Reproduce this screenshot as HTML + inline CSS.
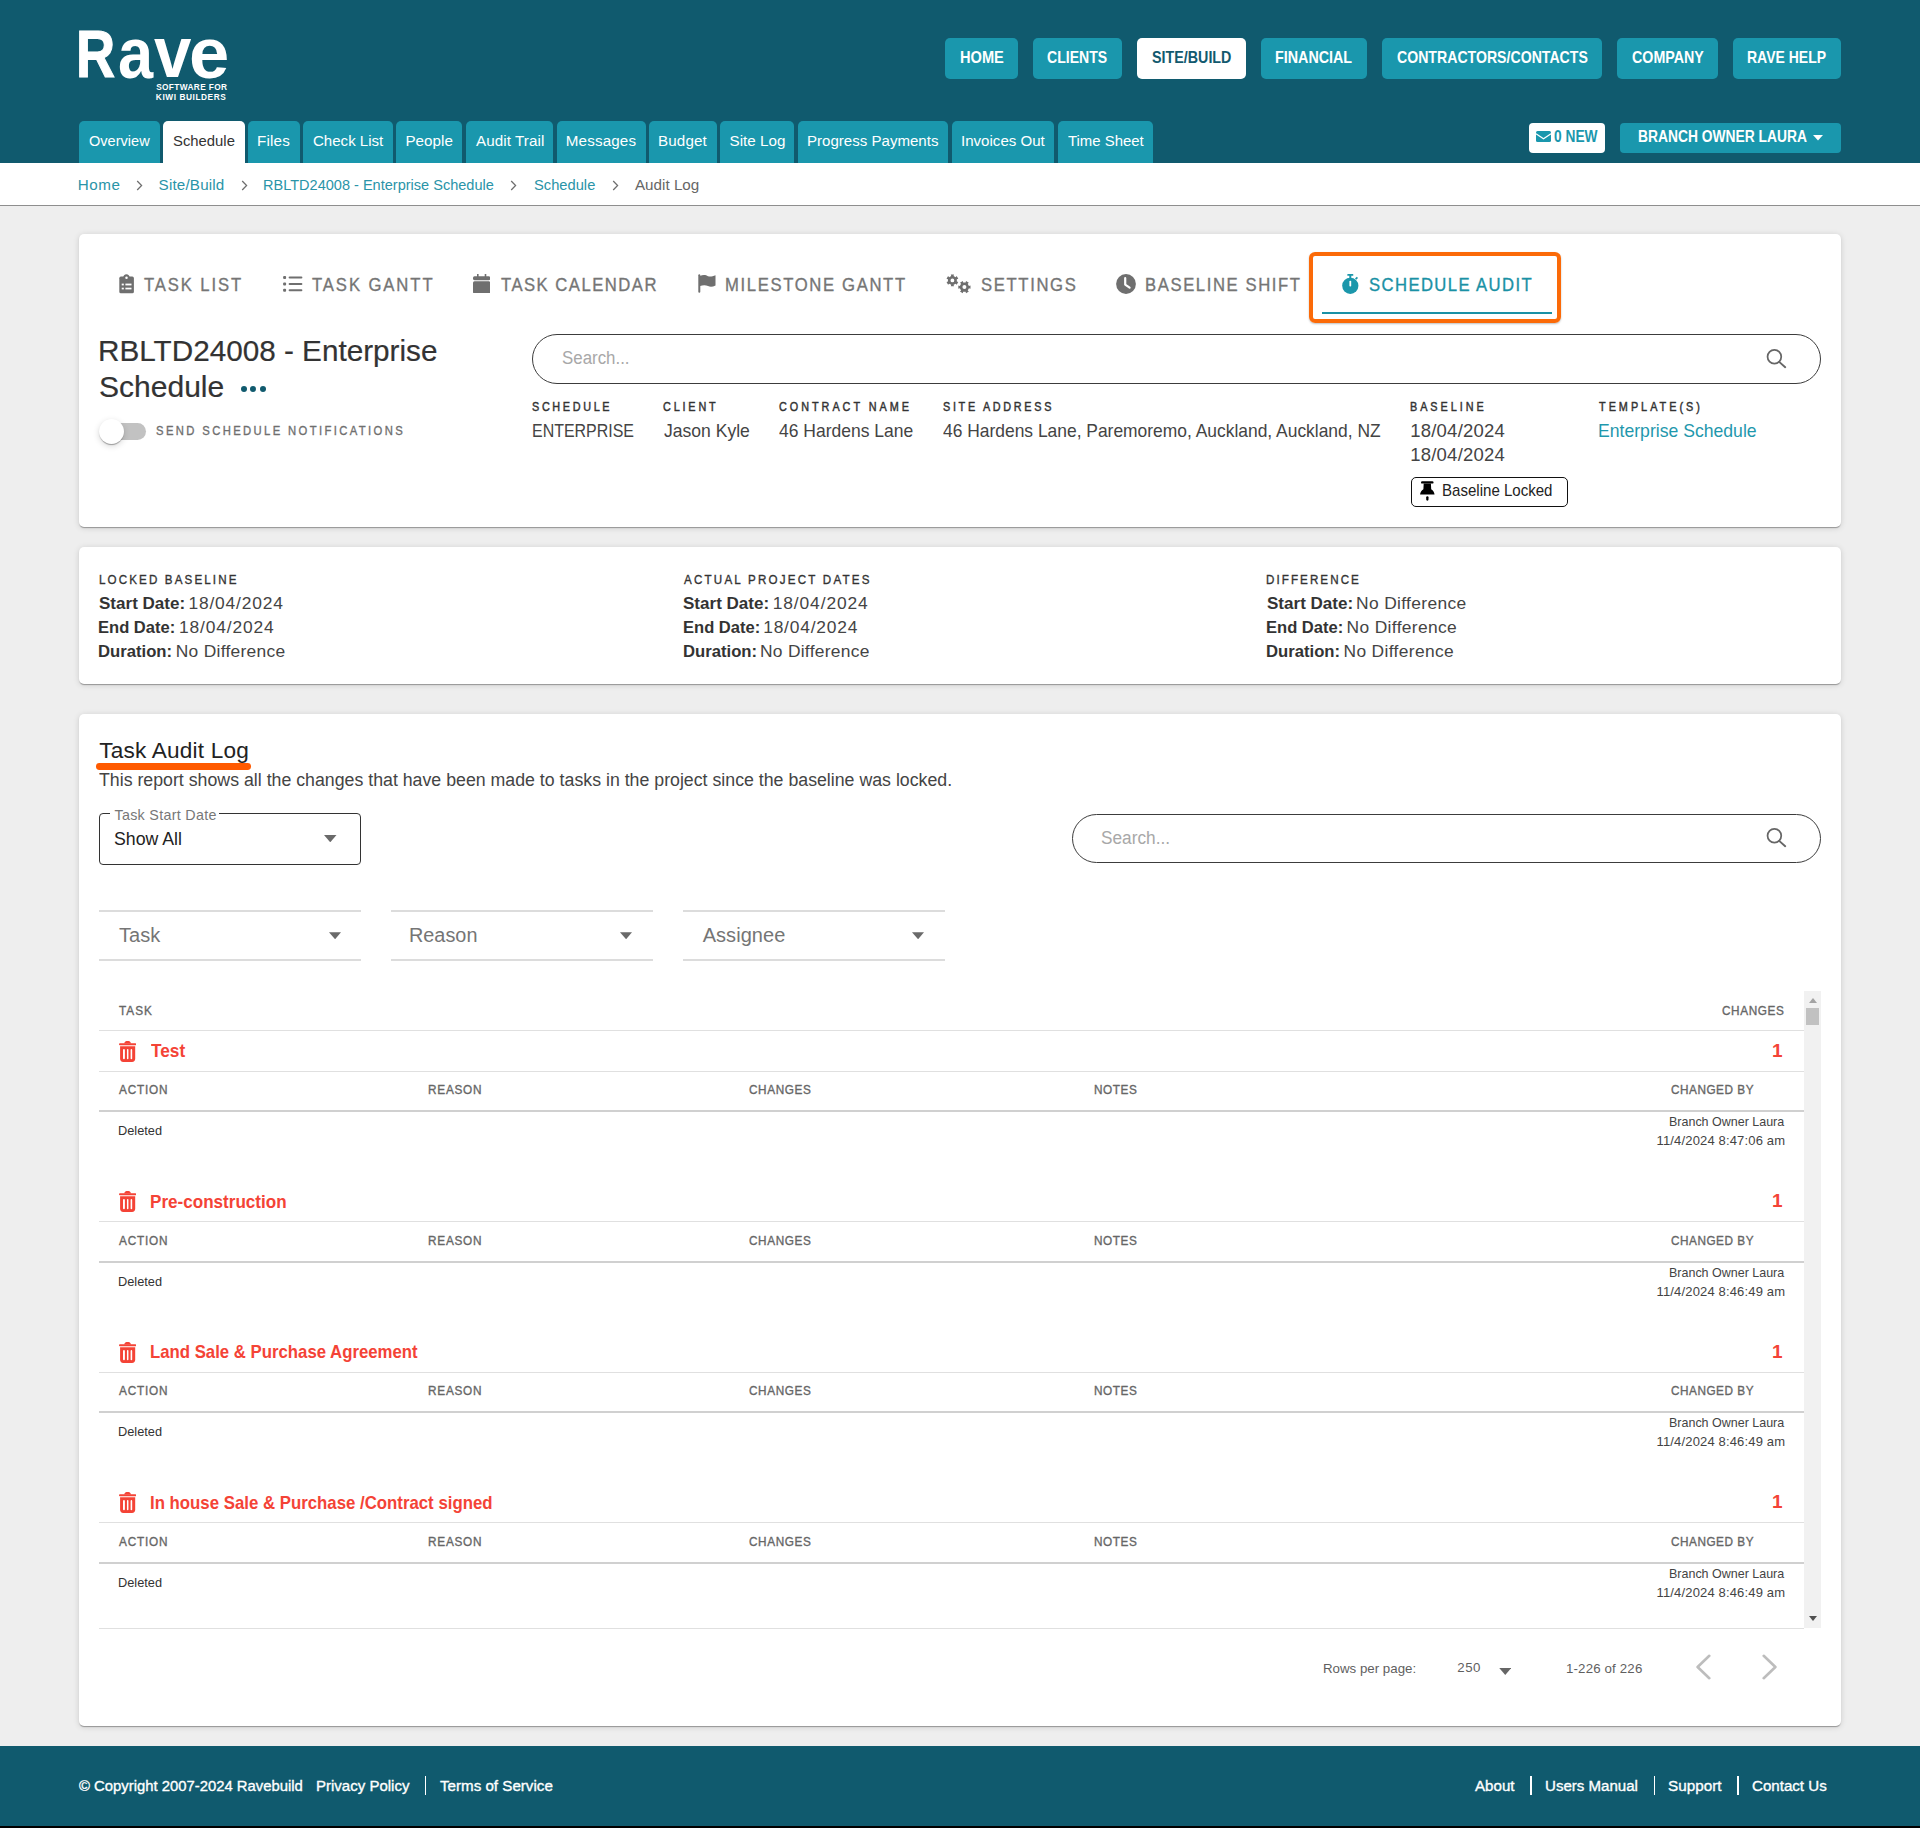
<!DOCTYPE html>
<html><head><meta charset="utf-8"><title>Rave - Schedule Audit</title>
<style>
html,body{margin:0;padding:0}
body{width:1920px;height:1828px;position:relative;overflow:hidden;background:#eeeeee;font-family:"Liberation Sans",sans-serif;}
.abs{position:absolute}
.t{position:absolute;white-space:nowrap;font-family:"Liberation Sans",sans-serif;transform-origin:0 0}
</style></head><body>
<div class="abs" style="left:0;top:0;width:1920px;height:163px;background:#105a6e"></div><div class="abs" style="left:945px;top:38px;width:73px;height:41px;border-radius:5px;background:#1a97ad"></div><div class="abs" style="left:1033px;top:38px;width:89px;height:41px;border-radius:5px;background:#1a97ad"></div><div class="abs" style="left:1137px;top:38px;width:109px;height:41px;border-radius:5px;background:#fff"></div><div class="abs" style="left:1261px;top:38px;width:106px;height:41px;border-radius:5px;background:#1a97ad"></div><div class="abs" style="left:1382px;top:38px;width:220px;height:41px;border-radius:5px;background:#1a97ad"></div><div class="abs" style="left:1617px;top:38px;width:101px;height:41px;border-radius:5px;background:#1a97ad"></div><div class="abs" style="left:1733px;top:38px;width:108px;height:41px;border-radius:5px;background:#1a97ad"></div><div class="abs" style="left:79px;top:121px;width:81px;height:42px;border-radius:5px 5px 0 0;background:#1a97ad"></div><div class="abs" style="left:163px;top:121px;width:82px;height:42px;border-radius:5px 5px 0 0;background:#fff"></div><div class="abs" style="left:248px;top:121px;width:52px;height:42px;border-radius:5px 5px 0 0;background:#1a97ad"></div><div class="abs" style="left:303px;top:121px;width:90px;height:42px;border-radius:5px 5px 0 0;background:#1a97ad"></div><div class="abs" style="left:396px;top:121px;width:66px;height:42px;border-radius:5px 5px 0 0;background:#1a97ad"></div><div class="abs" style="left:466px;top:121px;width:87px;height:42px;border-radius:5px 5px 0 0;background:#1a97ad"></div><div class="abs" style="left:557px;top:121px;width:89px;height:42px;border-radius:5px 5px 0 0;background:#1a97ad"></div><div class="abs" style="left:649px;top:121px;width:68px;height:42px;border-radius:5px 5px 0 0;background:#1a97ad"></div><div class="abs" style="left:720px;top:121px;width:74px;height:42px;border-radius:5px 5px 0 0;background:#1a97ad"></div><div class="abs" style="left:798px;top:121px;width:150px;height:42px;border-radius:5px 5px 0 0;background:#1a97ad"></div><div class="abs" style="left:952px;top:121px;width:102px;height:42px;border-radius:5px 5px 0 0;background:#1a97ad"></div><div class="abs" style="left:1058px;top:121px;width:95px;height:42px;border-radius:5px 5px 0 0;background:#1a97ad"></div><div class="abs" style="left:1529px;top:123px;width:76px;height:30px;border-radius:4px;background:#fff"></div><svg class="abs" style="left:1535.5px;top:131px" width="15" height="11" viewBox="0 0 15 11"><rect x="0" y="0" width="15" height="11" rx="1.5" fill="#1a97ad"/><path d="M0 2.7 L7.5 7.7 L15 2.7" stroke="#fff" stroke-width="1.3" fill="none"/></svg><div class="abs" style="left:1620px;top:123px;width:221px;height:30px;border-radius:4px;background:#1a97ad"></div><svg class="abs" style="left:1812.5px;top:135px" width="10" height="6" viewBox="0 0 10 6"><path d="M0 0 L10 0 L5 5.5 Z" fill="#fff"/></svg><div class="abs" style="left:0;top:163px;width:1920px;height:42px;background:#fff;border-bottom:1.5px solid #8e8e8e"></div><svg class="abs" style="left:135.7px;top:180px" width="7" height="11" viewBox="0 0 7 11"><path d="M1.2 1 L5.6 5.5 L1.2 10" stroke="#6e6e6e" stroke-width="1.25" fill="none"/></svg><svg class="abs" style="left:240.7px;top:180px" width="7" height="11" viewBox="0 0 7 11"><path d="M1.2 1 L5.6 5.5 L1.2 10" stroke="#6e6e6e" stroke-width="1.25" fill="none"/></svg><svg class="abs" style="left:510.0px;top:180px" width="7" height="11" viewBox="0 0 7 11"><path d="M1.2 1 L5.6 5.5 L1.2 10" stroke="#6e6e6e" stroke-width="1.25" fill="none"/></svg><svg class="abs" style="left:611.7px;top:180px" width="7" height="11" viewBox="0 0 7 11"><path d="M1.2 1 L5.6 5.5 L1.2 10" stroke="#6e6e6e" stroke-width="1.25" fill="none"/></svg><div class="abs" style="left:79px;top:234px;width:1762px;height:293px;background:#fff;border-radius:5px;box-shadow:0 2px 1px -1px rgba(0,0,0,.2),0 1px 1px 0 rgba(0,0,0,.14),0 1px 6px 0 rgba(0,0,0,.14);"></div><svg class="abs" style="left:119px;top:273.5px" width="15" height="20" viewBox="0 0 15 20"><rect x="0.3" y="2.6" width="14.6" height="16.7" rx="1.6" fill="#6f6f6f"/><path d="M4.1 4.2 C4.1 1.9 5.6 0.3 7.4 0.3 C9.3 0.3 10.7 1.9 10.7 4.2 Z" fill="#6f6f6f"/><circle cx="7.5" cy="3.75" r="1.25" fill="#fff"/><rect x="2.7" y="9.6" width="2.1" height="1.8" fill="#fff"/><rect x="6.4" y="9.6" width="6.1" height="1.8" fill="#fff"/><rect x="2.7" y="13.7" width="2.1" height="1.7" fill="#fff"/><rect x="6.4" y="13.7" width="6.1" height="1.7" fill="#fff"/></svg><svg class="abs" style="left:282.5px;top:275.5px" width="20" height="16" viewBox="0 0 20 16"><rect x="0.1" y="0" width="3" height="3" rx="1" fill="#6f6f6f"/><rect x="0.1" y="6.4" width="3" height="3" rx="1" fill="#6f6f6f"/><rect x="0.1" y="12.8" width="3" height="3" rx="1" fill="#6f6f6f"/><rect x="5.6" y="0.5" width="13.8" height="2" rx="1" fill="#6f6f6f"/><rect x="5.6" y="6.9" width="13.8" height="2" rx="1" fill="#6f6f6f"/><rect x="5.6" y="13.3" width="13.8" height="2" rx="1" fill="#6f6f6f"/></svg><svg class="abs" style="left:473px;top:273.7px" width="17.3" height="19.5" viewBox="0 0 17.3 19.5"><rect x="4" y="0" width="1.6" height="3" fill="#6f6f6f"/><rect x="11.7" y="0" width="1.6" height="3" fill="#6f6f6f"/><rect x="0" y="2.3" width="17.3" height="4" rx="1.5" fill="#6f6f6f"/><rect x="0" y="7.3" width="17.3" height="12.2" rx="1.5" fill="#6f6f6f"/></svg><svg class="abs" style="left:697.5px;top:274px" width="18" height="19" viewBox="0 0 18 19"><rect x="0.3" y="0.3" width="2" height="18.5" rx="1" fill="#6f6f6f"/><path d="M2 2 C5 0.5 8 1 10 2.2 C12 3 14.5 2.5 17.5 1.3 L17.5 11.5 C14.5 13 12 13 10 12 C8 11 5 10.8 2 12 Z" fill="#6f6f6f"/></svg><svg class="abs" style="left:945.5px;top:274px" width="25" height="20" viewBox="0 0 25 20"><path fill-rule="evenodd" d="M12.29 7.98 L10.71 10.71 L9.65 9.65 L7.59 10.84 L7.98 12.29 L4.82 12.29 L5.21 10.84 L3.15 9.65 L2.09 10.71 L0.51 7.98 L1.96 7.59 L1.96 5.21 L0.51 4.82 L2.09 2.09 L3.15 3.15 L5.21 1.96 L4.82 0.51 L7.98 0.51 L7.59 1.96 L9.65 3.15 L10.71 2.09 L12.29 4.82 L10.84 5.21 L10.84 7.59 Z M4.50 6.40 a1.90 1.90 0 1 0 3.80 0 a1.90 1.90 0 1 0 -3.80 0 Z" fill="#6f6f6f"/><path fill-rule="evenodd" d="M24.49 11.47 L24.49 14.73 L22.94 14.32 L21.72 16.42 L22.85 17.55 L20.03 19.19 L19.62 17.64 L17.18 17.64 L16.77 19.19 L13.95 17.55 L15.08 16.42 L13.86 14.32 L12.31 14.73 L12.31 11.47 L13.86 11.88 L15.08 9.78 L13.95 8.65 L16.77 7.01 L17.18 8.56 L19.62 8.56 L20.03 7.01 L22.85 8.65 L21.72 9.78 L22.94 11.88 Z M16.40 13.10 a2.00 2.00 0 1 0 4.00 0 a2.00 2.00 0 1 0 -4.00 0 Z" fill="#6f6f6f"/></svg><svg class="abs" style="left:1116px;top:273.5px" width="20" height="20" viewBox="0 0 20 20"><circle cx="10" cy="10" r="9.9" fill="#6f6f6f"/><path d="M9.2 4.2 L9.2 10.6 L13.6 13.6" stroke="#fff" stroke-width="2.2" fill="none" stroke-linecap="round" stroke-linejoin="round"/></svg><div class="abs" style="left:1309px;top:251.8px;width:243.8px;height:63.3px;border:4px solid #fb6a08;border-radius:6px;box-shadow:0 1px 2px rgba(0,0,0,.25)"></div><div class="abs" style="left:1322px;top:312px;width:230px;height:2.2px;background:#1a91a5"></div><svg class="abs" style="left:1341.5px;top:273.8px" width="17" height="20" viewBox="0 0 17 20"><rect x="5.3" y="0" width="6" height="1.8" rx=".5" fill="#1b97ab"/><rect x="7.3" y="1" width="2" height="3" fill="#1b97ab"/><path d="M13 4.5 L14.8 2.8 L16 4 L14.3 5.8 Z" fill="#1b97ab"/><circle cx="8.3" cy="11.8" r="8.1" fill="#1b97ab"/><rect x="7.4" y="6.8" width="1.8" height="5.8" rx=".8" fill="#fff"/></svg><div class="abs" style="left:241.00px;top:385.6px;width:6.2px;height:6.2px;border-radius:50%;background:#105a6e"></div><div class="abs" style="left:250.30px;top:385.6px;width:6.2px;height:6.2px;border-radius:50%;background:#105a6e"></div><div class="abs" style="left:259.70px;top:385.6px;width:6.2px;height:6.2px;border-radius:50%;background:#105a6e"></div><div class="abs" style="left:111px;top:423px;width:35px;height:17px;border-radius:8.5px;background:#c2c2c2"></div><div class="abs" style="left:99px;top:419px;width:25px;height:25px;border-radius:50%;background:#fff;box-shadow:0 2px 1px -1px rgba(0,0,0,.2),0 1px 1px 0 rgba(0,0,0,.14),0 2px 6px 0 rgba(0,0,0,.16)"></div><div class="abs" style="left:532px;top:334px;width:1289px;height:50px;box-sizing:border-box;border:1.3px solid #3c3c3c;border-radius:25px"></div><svg class="abs" style="left:1765.0px;top:346.0px" width="24" height="24" viewBox="0 0 24 24"><circle cx="9.4" cy="10.8" r="6.85" stroke="#666" stroke-width="1.75" fill="none"/><path d="M14.2 15.9 L20.2 21.2" stroke="#666" stroke-width="1.9" stroke-linecap="round"/></svg><div class="abs" style="left:1411px;top:477.3px;width:157px;height:29.3px;box-sizing:border-box;border:1.5px solid #111;border-radius:5px"></div><svg class="abs" style="left:1419.6px;top:481.3px" width="15" height="20" viewBox="0 0 15 20"><rect x="1" y="0.2" width="12.5" height="2.4" rx="1.2" fill="#000"/><path d="M3.7 2.4 L10.9 2.4 L11.2 8.3 C13.2 9.6 14.3 11.6 14.5 13.2 L14.5 13.6 L0.1 13.6 L0.1 13.2 C0.3 11.6 1.4 9.6 3.4 8.3 Z" fill="#000"/><rect x="6.2" y="15.2" width="2.3" height="4.5" rx="1.1" fill="#000"/></svg><div class="abs" style="left:79px;top:547px;width:1762px;height:137px;background:#fff;border-radius:5px;box-shadow:0 2px 1px -1px rgba(0,0,0,.2),0 1px 1px 0 rgba(0,0,0,.14),0 1px 6px 0 rgba(0,0,0,.14);"></div><div class="abs" style="left:79px;top:714px;width:1762px;height:1012px;background:#fff;border-radius:5px;box-shadow:0 2px 1px -1px rgba(0,0,0,.2),0 1px 1px 0 rgba(0,0,0,.14),0 1px 6px 0 rgba(0,0,0,.14);"></div><div class="abs" style="left:95.8px;top:763px;width:155.2px;height:6.8px;border-radius:3.4px;background:#ff5a00"></div><div class="abs" style="left:99.4px;top:813.3px;width:261.2px;height:52px;box-sizing:border-box;border:1.3px solid #333;border-radius:4px"></div><div class="abs" style="left:109.8px;top:810px;width:109.2px;height:6px;background:#fff"></div><svg class="abs" style="left:324.4px;top:835.2px" width="12.5" height="7.3" viewBox="0 0 12 7"><path d="M0 0 L12 0 L6 7 Z" fill="#6a6a6a"/></svg><div class="abs" style="left:1072px;top:813.5px;width:749px;height:49px;box-sizing:border-box;border:1.3px solid #3c3c3c;border-radius:25px"></div><svg class="abs" style="left:1765.0px;top:825.2px" width="24" height="24" viewBox="0 0 24 24"><circle cx="9.4" cy="10.8" r="6.85" stroke="#666" stroke-width="1.75" fill="none"/><path d="M14.2 15.9 L20.2 21.2" stroke="#666" stroke-width="1.9" stroke-linecap="round"/></svg><div class="abs" style="left:99.0px;top:910.2px;width:262px;height:2px;background:#dcdcdc"></div><div class="abs" style="left:99.0px;top:959px;width:262px;height:2px;background:#dcdcdc"></div><svg class="abs" style="left:328.6px;top:932.0px" width="12.2" height="7.4" viewBox="0 0 12 7"><path d="M0 0 L12 0 L6 7 Z" fill="#6a6a6a"/></svg><div class="abs" style="left:391.0px;top:910.2px;width:262px;height:2px;background:#dcdcdc"></div><div class="abs" style="left:391.0px;top:959px;width:262px;height:2px;background:#dcdcdc"></div><svg class="abs" style="left:620.0px;top:932.0px" width="12.2" height="7.4" viewBox="0 0 12 7"><path d="M0 0 L12 0 L6 7 Z" fill="#6a6a6a"/></svg><div class="abs" style="left:682.6px;top:910.2px;width:262px;height:2px;background:#dcdcdc"></div><div class="abs" style="left:682.6px;top:959px;width:262px;height:2px;background:#dcdcdc"></div><svg class="abs" style="left:912.0px;top:932.0px" width="12.2" height="7.4" viewBox="0 0 12 7"><path d="M0 0 L12 0 L6 7 Z" fill="#6a6a6a"/></svg><div class="abs" style="left:99px;top:1030px;width:1705px;height:1px;background:#e0e0e0"></div><svg class="abs" style="left:118.9px;top:1040.9px" width="17.2" height="21" viewBox="0 0 17.2 21"><rect x="0" y="2.3" width="17.2" height="1.9" rx=".9" fill="#f44336"/><path d="M5.1 2.6 C5.6 0.8 6.5 0 7.5 0 L9.7 0 C10.7 0 11.6 0.8 12.1 2.6 Z" fill="#f44336"/><path d="M1.1 5.3 L16.2 5.3 L16.2 17.8 C16.2 19.7 15 20.9 13.1 20.9 L4.2 20.9 C2.3 20.9 1.1 19.7 1.1 17.8 Z" fill="#f44336"/><rect x="4" y="8.1" width="1.9" height="10.2" rx=".95" fill="#fff"/><rect x="7.95" y="8.1" width="1.5" height="10.2" rx=".75" fill="#fff"/><rect x="11.6" y="8.1" width="1.6" height="10.2" rx=".8" fill="#fff"/></svg><div class="abs" style="left:99px;top:1071px;width:1705px;height:1px;background:#e0e0e0"></div><div class="abs" style="left:99px;top:1110px;width:1705px;height:2px;background:#d0d0d0"></div><svg class="abs" style="left:118.9px;top:1191.4px" width="17.2" height="21" viewBox="0 0 17.2 21"><rect x="0" y="2.3" width="17.2" height="1.9" rx=".9" fill="#f44336"/><path d="M5.1 2.6 C5.6 0.8 6.5 0 7.5 0 L9.7 0 C10.7 0 11.6 0.8 12.1 2.6 Z" fill="#f44336"/><path d="M1.1 5.3 L16.2 5.3 L16.2 17.8 C16.2 19.7 15 20.9 13.1 20.9 L4.2 20.9 C2.3 20.9 1.1 19.7 1.1 17.8 Z" fill="#f44336"/><rect x="4" y="8.1" width="1.9" height="10.2" rx=".95" fill="#fff"/><rect x="7.95" y="8.1" width="1.5" height="10.2" rx=".75" fill="#fff"/><rect x="11.6" y="8.1" width="1.6" height="10.2" rx=".8" fill="#fff"/></svg><div class="abs" style="left:99px;top:1221px;width:1705px;height:1px;background:#e0e0e0"></div><div class="abs" style="left:99px;top:1261px;width:1705px;height:2px;background:#d0d0d0"></div><svg class="abs" style="left:118.9px;top:1341.9px" width="17.2" height="21" viewBox="0 0 17.2 21"><rect x="0" y="2.3" width="17.2" height="1.9" rx=".9" fill="#f44336"/><path d="M5.1 2.6 C5.6 0.8 6.5 0 7.5 0 L9.7 0 C10.7 0 11.6 0.8 12.1 2.6 Z" fill="#f44336"/><path d="M1.1 5.3 L16.2 5.3 L16.2 17.8 C16.2 19.7 15 20.9 13.1 20.9 L4.2 20.9 C2.3 20.9 1.1 19.7 1.1 17.8 Z" fill="#f44336"/><rect x="4" y="8.1" width="1.9" height="10.2" rx=".95" fill="#fff"/><rect x="7.95" y="8.1" width="1.5" height="10.2" rx=".75" fill="#fff"/><rect x="11.6" y="8.1" width="1.6" height="10.2" rx=".8" fill="#fff"/></svg><div class="abs" style="left:99px;top:1372px;width:1705px;height:1px;background:#e0e0e0"></div><div class="abs" style="left:99px;top:1411px;width:1705px;height:2px;background:#d0d0d0"></div><svg class="abs" style="left:118.9px;top:1492.4px" width="17.2" height="21" viewBox="0 0 17.2 21"><rect x="0" y="2.3" width="17.2" height="1.9" rx=".9" fill="#f44336"/><path d="M5.1 2.6 C5.6 0.8 6.5 0 7.5 0 L9.7 0 C10.7 0 11.6 0.8 12.1 2.6 Z" fill="#f44336"/><path d="M1.1 5.3 L16.2 5.3 L16.2 17.8 C16.2 19.7 15 20.9 13.1 20.9 L4.2 20.9 C2.3 20.9 1.1 19.7 1.1 17.8 Z" fill="#f44336"/><rect x="4" y="8.1" width="1.9" height="10.2" rx=".95" fill="#fff"/><rect x="7.95" y="8.1" width="1.5" height="10.2" rx=".75" fill="#fff"/><rect x="11.6" y="8.1" width="1.6" height="10.2" rx=".8" fill="#fff"/></svg><div class="abs" style="left:99px;top:1522px;width:1705px;height:1px;background:#e0e0e0"></div><div class="abs" style="left:99px;top:1562px;width:1705px;height:2px;background:#d0d0d0"></div><div class="abs" style="left:99px;top:1628.2px;width:1705px;height:1px;background:#e0e0e0"></div><div class="abs" style="left:1804.3px;top:991.3px;width:16.7px;height:637px;background:#f1f1f1"></div><div class="abs" style="left:1806px;top:1008px;width:13px;height:17px;background:#c1c1c1"></div><svg class="abs" style="left:1808.5px;top:997.5px" width="8" height="5" viewBox="0 0 8 5"><path d="M0 5 L8 5 L4 0 Z" fill="#a3a3a3"/></svg><svg class="abs" style="left:1808.5px;top:1616px" width="8" height="5" viewBox="0 0 8 5"><path d="M0 0 L8 0 L4 5 Z" fill="#505050"/></svg><svg class="abs" style="left:1498.5px;top:1667.7px" width="12.5" height="7.0" viewBox="0 0 12 7"><path d="M0 0 L12 0 L6 7 Z" fill="#666"/></svg><svg class="abs" style="left:1695px;top:1654px" width="17" height="26" viewBox="0 0 17 26"><path d="M14.3 1.8 L2.6 13 L14.3 24.2" stroke="#bdbdbd" stroke-width="2.6" stroke-linecap="round" stroke-linejoin="round" fill="none"/></svg><svg class="abs" style="left:1761px;top:1654px" width="17" height="26" viewBox="0 0 17 26"><path d="M2.7 1.8 L14.4 13 L2.7 24.2" stroke="#bdbdbd" stroke-width="2.6" stroke-linecap="round" stroke-linejoin="round" fill="none"/></svg><div class="abs" style="left:0;top:1746px;width:1920px;height:80px;background:#105a6e"></div><div class="abs" style="left:0;top:1826px;width:1920px;height:2px;background:#000"></div><div class="abs" style="left:424.8px;top:1776.3px;width:1.3px;height:18.3px;background:#fff"></div><div class="abs" style="left:1530.4px;top:1776.3px;width:1.3px;height:18.3px;background:#fff"></div><div class="abs" style="left:1653.5px;top:1776.3px;width:1.3px;height:18.3px;background:#fff"></div><div class="abs" style="left:1737.3px;top:1776.3px;width:1.3px;height:18.3px;background:#fff"></div><span class="t" id="t0" style="left:75.78px;top:20.45px;font-size:67.50px;line-height:67.50px;color:#fff;font-weight:700;transform:scaleX(0.8028);-webkit-text-stroke:1.1px #fff;">R</span><span class="t" id="t1" style="left:117.75px;top:15.79px;font-size:73.00px;line-height:73.00px;color:#fff;font-weight:700;transform:scaleX(0.8656);">a</span><span class="t" id="t2" style="left:153.84px;top:15.39px;font-size:73.00px;line-height:73.00px;color:#fff;font-weight:700;transform:scaleX(0.9199);">v</span><span class="t" id="t3" style="left:189.37px;top:15.79px;font-size:73.00px;line-height:73.00px;color:#fff;font-weight:700;transform:scaleX(0.9926);">e</span><span class="t" id="t4" style="left:156.16px;top:83.17px;font-size:8.30px;line-height:8.30px;color:#fff;font-weight:700;letter-spacing:0.361px;">SOFTWARE FOR</span><span class="t" id="t5" style="left:155.84px;top:93.17px;font-size:8.30px;line-height:8.30px;color:#fff;font-weight:700;letter-spacing:0.569px;">KIWI BUILDERS</span><span class="t" id="t6" style="left:959.72px;top:49.38px;font-size:16.20px;line-height:16.20px;color:#fff;font-weight:700;transform:scaleX(0.9030);">HOME</span><span class="t" id="t7" style="left:1047.42px;top:49.38px;font-size:16.20px;line-height:16.20px;color:#fff;font-weight:700;transform:scaleX(0.8683);">CLIENTS</span><span class="t" id="t8" style="left:1151.89px;top:49.38px;font-size:16.20px;line-height:16.20px;color:#12596e;font-weight:700;transform:scaleX(0.8830);">SITE/BUILD</span><span class="t" id="t9" style="left:1275.04px;top:49.38px;font-size:16.20px;line-height:16.20px;color:#fff;font-weight:700;transform:scaleX(0.8838);">FINANCIAL</span><span class="t" id="t10" style="left:1396.72px;top:49.38px;font-size:16.20px;line-height:16.20px;color:#fff;font-weight:700;transform:scaleX(0.8721);">CONTRACTORS/CONTACTS</span><span class="t" id="t11" style="left:1631.71px;top:49.38px;font-size:16.20px;line-height:16.20px;color:#fff;font-weight:700;transform:scaleX(0.8807);">COMPANY</span><span class="t" id="t12" style="left:1747.36px;top:49.38px;font-size:16.20px;line-height:16.20px;color:#fff;font-weight:700;transform:scaleX(0.8651);">RAVE HELP</span><span class="t" id="t13" style="left:88.61px;top:133.13px;font-size:15.20px;line-height:15.20px;color:#fff;transform:scaleX(0.9583);">Overview</span><span class="t" id="t14" style="left:173.03px;top:133.13px;font-size:15.20px;line-height:15.20px;color:#333;transform:scaleX(0.9778);">Schedule</span><span class="t" id="t15" style="left:257.05px;top:133.13px;font-size:15.20px;line-height:15.20px;color:#fff;letter-spacing:0.179px;">Files</span><span class="t" id="t16" style="left:312.53px;top:133.13px;font-size:15.20px;line-height:15.20px;color:#fff;transform:scaleX(0.9911);">Check List</span><span class="t" id="t17" style="left:405.45px;top:133.13px;font-size:15.20px;line-height:15.20px;color:#fff;letter-spacing:0.045px;">People</span><span class="t" id="t18" style="left:475.97px;top:133.13px;font-size:15.20px;line-height:15.20px;color:#fff;letter-spacing:0.082px;">Audit Trail</span><span class="t" id="t19" style="left:565.75px;top:133.13px;font-size:15.20px;line-height:15.20px;color:#fff;letter-spacing:0.152px;">Messages</span><span class="t" id="t20" style="left:658.05px;top:133.13px;font-size:15.20px;line-height:15.20px;color:#fff;letter-spacing:0.124px;">Budget</span><span class="t" id="t21" style="left:729.61px;top:133.13px;font-size:15.20px;line-height:15.20px;color:#fff;">Site Log</span><span class="t" id="t22" style="left:807.06px;top:133.13px;font-size:15.20px;line-height:15.20px;color:#fff;transform:scaleX(0.9921);">Progress Payments</span><span class="t" id="t23" style="left:960.61px;top:133.13px;font-size:15.20px;line-height:15.20px;color:#fff;transform:scaleX(0.9927);">Invoices Out</span><span class="t" id="t24" style="left:1067.66px;top:133.13px;font-size:15.20px;line-height:15.20px;color:#fff;transform:scaleX(0.9823);">Time Sheet</span><span class="t" id="t25" style="left:1554.46px;top:128.72px;font-size:15.80px;line-height:15.80px;color:#1a97ad;font-weight:700;transform:scaleX(0.8706);">0 NEW</span><span class="t" id="t26" style="left:1638.07px;top:128.72px;font-size:15.80px;line-height:15.80px;color:#fff;font-weight:700;transform:scaleX(0.8753);">BRANCH OWNER LAURA</span><span class="t" id="t27" style="left:77.75px;top:177.13px;font-size:15.20px;line-height:15.20px;color:#2a94a8;letter-spacing:0.569px;">Home</span><span class="t" id="t28" style="left:158.61px;top:177.13px;font-size:15.20px;line-height:15.20px;color:#2a94a8;letter-spacing:0.166px;">Site/Build</span><span class="t" id="t29" style="left:263.11px;top:177.13px;font-size:15.20px;line-height:15.20px;color:#2a94a8;transform:scaleX(0.9572);">RBLTD24008 - Enterprise Schedule</span><span class="t" id="t30" style="left:533.63px;top:177.13px;font-size:15.20px;line-height:15.20px;color:#2a94a8;transform:scaleX(0.9681);">Schedule</span><span class="t" id="t31" style="left:634.97px;top:177.13px;font-size:15.20px;line-height:15.20px;color:#666;letter-spacing:0.015px;">Audit Log</span><span class="t" id="t32" style="left:144.03px;top:275.54px;font-size:18.50px;line-height:18.50px;color:#757575;-webkit-text-stroke:0.35px currentColor;letter-spacing:2.085px;transform:scaleX(0.9000);">TASK LIST</span><span class="t" id="t33" style="left:311.93px;top:275.54px;font-size:18.50px;line-height:18.50px;color:#757575;-webkit-text-stroke:0.35px currentColor;letter-spacing:2.130px;transform:scaleX(0.9000);">TASK GANTT</span><span class="t" id="t34" style="left:501.33px;top:275.54px;font-size:18.50px;line-height:18.50px;color:#757575;-webkit-text-stroke:0.35px currentColor;letter-spacing:1.656px;transform:scaleX(0.9000);">TASK CALENDAR</span><span class="t" id="t35" style="left:724.63px;top:275.54px;font-size:18.50px;line-height:18.50px;color:#757575;-webkit-text-stroke:0.35px currentColor;letter-spacing:1.832px;transform:scaleX(0.9000);">MILESTONE GANTT</span><span class="t" id="t36" style="left:980.94px;top:275.54px;font-size:18.50px;line-height:18.50px;color:#757575;-webkit-text-stroke:0.35px currentColor;letter-spacing:1.834px;transform:scaleX(0.9000);">SETTINGS</span><span class="t" id="t37" style="left:1145.33px;top:275.54px;font-size:18.50px;line-height:18.50px;color:#757575;-webkit-text-stroke:0.35px currentColor;letter-spacing:1.784px;transform:scaleX(0.9000);">BASELINE SHIFT</span><span class="t" id="t38" style="left:1369.14px;top:275.54px;font-size:18.50px;line-height:18.50px;color:#1a91a5;-webkit-text-stroke:0.35px currentColor;letter-spacing:1.564px;transform:scaleX(0.9000);">SCHEDULE AUDIT</span><span class="t" id="t39" style="left:97.86px;top:335.26px;font-size:30.40px;line-height:30.40px;color:#333;-webkit-text-stroke:0.20px currentColor;transform:scaleX(0.9771);">RBLTD24008 - Enterprise</span><span class="t" id="t40" style="left:98.94px;top:370.86px;font-size:30.40px;line-height:30.40px;color:#333;-webkit-text-stroke:0.20px currentColor;transform:scaleX(0.9879);">Schedule</span><span class="t" id="t41" style="left:156.09px;top:425.16px;font-size:12.80px;line-height:12.80px;color:#6f6f6f;-webkit-text-stroke:0.35px currentColor;letter-spacing:2.698px;transform:scaleX(0.8800);">SEND SCHEDULE NOTIFICATIONS</span><span class="t" id="t42" style="left:561.98px;top:349.90px;font-size:17.60px;line-height:17.60px;color:#a8a8a8;transform:scaleX(0.9593);">Search...</span><span class="t" id="t43" style="left:531.91px;top:400.99px;font-size:12.30px;line-height:12.30px;color:#333;-webkit-text-stroke:0.45px currentColor;letter-spacing:3.023px;transform:scaleX(0.8800);">SCHEDULE</span><span class="t" id="t44" style="left:663.20px;top:400.99px;font-size:12.30px;line-height:12.30px;color:#333;-webkit-text-stroke:0.45px currentColor;letter-spacing:3.219px;transform:scaleX(0.8800);">CLIENT</span><span class="t" id="t45" style="left:778.75px;top:400.99px;font-size:12.30px;line-height:12.30px;color:#333;-webkit-text-stroke:0.45px currentColor;letter-spacing:3.391px;transform:scaleX(0.8800);">CONTRACT NAME</span><span class="t" id="t46" style="left:942.81px;top:400.99px;font-size:12.30px;line-height:12.30px;color:#333;-webkit-text-stroke:0.45px currentColor;letter-spacing:3.058px;transform:scaleX(0.8800);">SITE ADDRESS</span><span class="t" id="t47" style="left:1410.41px;top:400.99px;font-size:12.30px;line-height:12.30px;color:#333;-webkit-text-stroke:0.45px currentColor;letter-spacing:3.363px;transform:scaleX(0.8800);">BASELINE</span><span class="t" id="t48" style="left:1598.76px;top:400.99px;font-size:12.30px;line-height:12.30px;color:#333;-webkit-text-stroke:0.45px currentColor;letter-spacing:3.427px;transform:scaleX(0.8800);">TEMPLATE(S)</span><span class="t" id="t49" style="left:531.69px;top:421.54px;font-size:18.50px;line-height:18.50px;color:#444;transform:scaleX(0.8628);">ENTERPRISE</span><span class="t" id="t50" style="left:663.73px;top:421.54px;font-size:18.50px;line-height:18.50px;color:#444;transform:scaleX(0.9481);">Jason Kyle</span><span class="t" id="t51" style="left:778.90px;top:421.54px;font-size:18.50px;line-height:18.50px;color:#444;transform:scaleX(0.9452);">46 Hardens Lane</span><span class="t" id="t52" style="left:942.90px;top:421.54px;font-size:18.50px;line-height:18.50px;color:#444;transform:scaleX(0.9415);">46 Hardens Lane, Paremoremo, Auckland, Auckland, NZ</span><span class="t" id="t53" style="left:1410.19px;top:421.54px;font-size:18.50px;line-height:18.50px;color:#444;letter-spacing:0.229px;">18/04/2024</span><span class="t" id="t54" style="left:1410.19px;top:445.54px;font-size:18.50px;line-height:18.50px;color:#444;letter-spacing:0.229px;">18/04/2024</span><span class="t" id="t55" style="left:1597.56px;top:421.54px;font-size:18.50px;line-height:18.50px;color:#1f98ad;transform:scaleX(0.9521);">Enterprise Schedule</span><span class="t" id="t56" style="left:1441.96px;top:482.18px;font-size:16.20px;line-height:16.20px;color:#222;transform:scaleX(0.9302);">Baseline Locked</span><span class="t" id="t57" style="left:98.55px;top:572.82px;font-size:13.20px;line-height:13.20px;color:#333;-webkit-text-stroke:0.35px currentColor;letter-spacing:2.414px;transform:scaleX(0.8800);">LOCKED BASELINE</span><span class="t" id="t58" style="left:683.68px;top:572.82px;font-size:13.20px;line-height:13.20px;color:#333;-webkit-text-stroke:0.35px currentColor;letter-spacing:2.504px;transform:scaleX(0.8800);">ACTUAL PROJECT DATES</span><span class="t" id="t59" style="left:1266.25px;top:572.82px;font-size:13.20px;line-height:13.20px;color:#333;-webkit-text-stroke:0.35px currentColor;letter-spacing:2.361px;transform:scaleX(0.8800);">DIFFERENCE</span><span class="t" id="t60" style="left:99.01px;top:594.87px;font-size:17.40px;line-height:17.40px;color:#333;font-weight:700;transform:scaleX(0.9793);">Start Date:</span><span class="t" id="t61" style="left:188.47px;top:594.87px;font-size:17.40px;line-height:17.40px;color:#444;letter-spacing:0.810px;">18/04/2024</span><span class="t" id="t62" style="left:98.39px;top:618.77px;font-size:17.40px;line-height:17.40px;color:#333;font-weight:700;transform:scaleX(0.9511);">End Date:</span><span class="t" id="t63" style="left:178.97px;top:618.77px;font-size:17.40px;line-height:17.40px;color:#444;letter-spacing:0.843px;">18/04/2024</span><span class="t" id="t64" style="left:98.38px;top:642.77px;font-size:17.40px;line-height:17.40px;color:#333;font-weight:700;transform:scaleX(0.9589);">Duration:</span><span class="t" id="t65" style="left:175.77px;top:642.77px;font-size:17.40px;line-height:17.40px;color:#444;letter-spacing:0.282px;">No Difference</span><span class="t" id="t66" style="left:683.21px;top:594.87px;font-size:17.40px;line-height:17.40px;color:#333;font-weight:700;transform:scaleX(0.9793);">Start Date:</span><span class="t" id="t67" style="left:772.67px;top:594.87px;font-size:17.40px;line-height:17.40px;color:#444;letter-spacing:0.899px;">18/04/2024</span><span class="t" id="t68" style="left:682.59px;top:618.77px;font-size:17.40px;line-height:17.40px;color:#333;font-weight:700;transform:scaleX(0.9511);">End Date:</span><span class="t" id="t69" style="left:763.17px;top:618.77px;font-size:17.40px;line-height:17.40px;color:#444;letter-spacing:0.810px;">18/04/2024</span><span class="t" id="t70" style="left:682.58px;top:642.77px;font-size:17.40px;line-height:17.40px;color:#333;font-weight:700;transform:scaleX(0.9589);">Duration:</span><span class="t" id="t71" style="left:759.97px;top:642.77px;font-size:17.40px;line-height:17.40px;color:#444;letter-spacing:0.282px;">No Difference</span><span class="t" id="t72" style="left:1266.71px;top:594.87px;font-size:17.40px;line-height:17.40px;color:#333;font-weight:700;transform:scaleX(0.9793);">Start Date:</span><span class="t" id="t73" style="left:1356.07px;top:594.87px;font-size:17.40px;line-height:17.40px;color:#444;letter-spacing:0.340px;">No Difference</span><span class="t" id="t74" style="left:1266.09px;top:618.77px;font-size:17.40px;line-height:17.40px;color:#333;font-weight:700;transform:scaleX(0.9511);">End Date:</span><span class="t" id="t75" style="left:1346.57px;top:618.77px;font-size:17.40px;line-height:17.40px;color:#444;letter-spacing:0.349px;">No Difference</span><span class="t" id="t76" style="left:1266.08px;top:642.77px;font-size:17.40px;line-height:17.40px;color:#333;font-weight:700;transform:scaleX(0.9589);">Duration:</span><span class="t" id="t77" style="left:1343.47px;top:642.77px;font-size:17.40px;line-height:17.40px;color:#444;letter-spacing:0.357px;">No Difference</span><span class="t" id="t78" style="left:99.19px;top:740.26px;font-size:22.60px;line-height:22.60px;color:#222;letter-spacing:0.200px;">Task Audit Log</span><span class="t" id="t79" style="left:99.30px;top:771.46px;font-size:18.00px;line-height:18.00px;color:#444;transform:scaleX(0.9857);">This report shows all the changes that have been made to tasks in the project since the baseline was locked.</span><span class="t" id="t80" style="left:114.48px;top:807.89px;font-size:14.30px;line-height:14.30px;color:#777;letter-spacing:0.302px;">Task Start Date</span><span class="t" id="t81" style="left:113.70px;top:829.94px;font-size:18.50px;line-height:18.50px;color:#222;transform:scaleX(0.9580);">Show All</span><span class="t" id="t82" style="left:1101.22px;top:830.10px;font-size:17.60px;line-height:17.60px;color:#a8a8a8;transform:scaleX(0.9807);">Search...</span><span class="t" id="t83" style="left:119.05px;top:925.07px;font-size:20.00px;line-height:20.00px;color:#757575;">Task</span><span class="t" id="t84" style="left:409.37px;top:925.07px;font-size:20.00px;line-height:20.00px;color:#757575;transform:scaleX(0.9925);">Reason</span><span class="t" id="t85" style="left:702.66px;top:925.07px;font-size:20.00px;line-height:20.00px;color:#757575;letter-spacing:0.049px;">Assignee</span><span class="t" id="t86" style="left:118.84px;top:1004.66px;font-size:12.80px;line-height:12.80px;color:#666;-webkit-text-stroke:0.35px currentColor;letter-spacing:1.091px;transform:scaleX(0.9200);">TASK</span><span class="t" id="t87" style="left:1722.40px;top:1004.66px;font-size:12.80px;line-height:12.80px;color:#666;-webkit-text-stroke:0.35px currentColor;letter-spacing:0.662px;transform:scaleX(0.9200);">CHANGES</span><span class="t" id="t88" style="left:150.81px;top:1041.21px;font-size:19.00px;line-height:19.00px;color:#f44336;font-weight:700;transform:scaleX(0.9080);">Test</span><span class="t" id="t89" style="left:1772.10px;top:1040.91px;font-size:19.00px;line-height:19.00px;color:#f44336;font-weight:700;">1</span><span class="t" id="t90" style="left:119.18px;top:1084.46px;font-size:12.80px;line-height:12.80px;color:#666;-webkit-text-stroke:0.35px currentColor;letter-spacing:0.868px;transform:scaleX(0.9200);">ACTION</span><span class="t" id="t91" style="left:428.23px;top:1084.46px;font-size:12.80px;line-height:12.80px;color:#666;-webkit-text-stroke:0.35px currentColor;letter-spacing:0.827px;transform:scaleX(0.9200);">REASON</span><span class="t" id="t92" style="left:749.00px;top:1084.46px;font-size:12.80px;line-height:12.80px;color:#666;-webkit-text-stroke:0.35px currentColor;letter-spacing:0.671px;transform:scaleX(0.9200);">CHANGES</span><span class="t" id="t93" style="left:1094.03px;top:1084.46px;font-size:12.80px;line-height:12.80px;color:#666;-webkit-text-stroke:0.35px currentColor;letter-spacing:0.595px;transform:scaleX(0.9200);">NOTES</span><span class="t" id="t94" style="left:1670.65px;top:1084.46px;font-size:12.80px;line-height:12.80px;color:#666;-webkit-text-stroke:0.35px currentColor;letter-spacing:0.562px;transform:scaleX(0.9200);">CHANGED BY</span><span class="t" id="t95" style="left:118.15px;top:1124.04px;font-size:13.30px;line-height:13.30px;color:#333;transform:scaleX(0.9614);">Deleted</span><span class="t" id="t96" style="left:1668.98px;top:1115.19px;font-size:13.00px;line-height:13.00px;color:#444;transform:scaleX(0.9606);">Branch Owner Laura</span><span class="t" id="t97" style="left:1656.51px;top:1134.19px;font-size:13.00px;line-height:13.00px;color:#444;letter-spacing:0.159px;">11/4/2024 8:47:06 am</span><span class="t" id="t98" style="left:149.86px;top:1191.71px;font-size:19.00px;line-height:19.00px;color:#f44336;font-weight:700;transform:scaleX(0.8985);">Pre-construction</span><span class="t" id="t99" style="left:1772.10px;top:1191.41px;font-size:19.00px;line-height:19.00px;color:#f44336;font-weight:700;">1</span><span class="t" id="t100" style="left:119.18px;top:1234.96px;font-size:12.80px;line-height:12.80px;color:#666;-webkit-text-stroke:0.35px currentColor;letter-spacing:0.868px;transform:scaleX(0.9200);">ACTION</span><span class="t" id="t101" style="left:428.23px;top:1234.96px;font-size:12.80px;line-height:12.80px;color:#666;-webkit-text-stroke:0.35px currentColor;letter-spacing:0.827px;transform:scaleX(0.9200);">REASON</span><span class="t" id="t102" style="left:749.00px;top:1234.96px;font-size:12.80px;line-height:12.80px;color:#666;-webkit-text-stroke:0.35px currentColor;letter-spacing:0.671px;transform:scaleX(0.9200);">CHANGES</span><span class="t" id="t103" style="left:1094.03px;top:1234.96px;font-size:12.80px;line-height:12.80px;color:#666;-webkit-text-stroke:0.35px currentColor;letter-spacing:0.595px;transform:scaleX(0.9200);">NOTES</span><span class="t" id="t104" style="left:1670.65px;top:1234.96px;font-size:12.80px;line-height:12.80px;color:#666;-webkit-text-stroke:0.35px currentColor;letter-spacing:0.562px;transform:scaleX(0.9200);">CHANGED BY</span><span class="t" id="t105" style="left:118.15px;top:1274.54px;font-size:13.30px;line-height:13.30px;color:#333;transform:scaleX(0.9614);">Deleted</span><span class="t" id="t106" style="left:1668.98px;top:1265.69px;font-size:13.00px;line-height:13.00px;color:#444;transform:scaleX(0.9606);">Branch Owner Laura</span><span class="t" id="t107" style="left:1656.51px;top:1284.69px;font-size:13.00px;line-height:13.00px;color:#444;letter-spacing:0.159px;">11/4/2024 8:46:49 am</span><span class="t" id="t108" style="left:149.88px;top:1342.21px;font-size:19.00px;line-height:19.00px;color:#f44336;font-weight:700;transform:scaleX(0.8821);">Land Sale &amp; Purchase Agreement</span><span class="t" id="t109" style="left:1772.10px;top:1341.91px;font-size:19.00px;line-height:19.00px;color:#f44336;font-weight:700;">1</span><span class="t" id="t110" style="left:119.18px;top:1385.46px;font-size:12.80px;line-height:12.80px;color:#666;-webkit-text-stroke:0.35px currentColor;letter-spacing:0.868px;transform:scaleX(0.9200);">ACTION</span><span class="t" id="t111" style="left:428.23px;top:1385.46px;font-size:12.80px;line-height:12.80px;color:#666;-webkit-text-stroke:0.35px currentColor;letter-spacing:0.827px;transform:scaleX(0.9200);">REASON</span><span class="t" id="t112" style="left:749.00px;top:1385.46px;font-size:12.80px;line-height:12.80px;color:#666;-webkit-text-stroke:0.35px currentColor;letter-spacing:0.671px;transform:scaleX(0.9200);">CHANGES</span><span class="t" id="t113" style="left:1094.03px;top:1385.46px;font-size:12.80px;line-height:12.80px;color:#666;-webkit-text-stroke:0.35px currentColor;letter-spacing:0.595px;transform:scaleX(0.9200);">NOTES</span><span class="t" id="t114" style="left:1670.65px;top:1385.46px;font-size:12.80px;line-height:12.80px;color:#666;-webkit-text-stroke:0.35px currentColor;letter-spacing:0.562px;transform:scaleX(0.9200);">CHANGED BY</span><span class="t" id="t115" style="left:118.15px;top:1425.04px;font-size:13.30px;line-height:13.30px;color:#333;transform:scaleX(0.9614);">Deleted</span><span class="t" id="t116" style="left:1668.98px;top:1416.19px;font-size:13.00px;line-height:13.00px;color:#444;transform:scaleX(0.9606);">Branch Owner Laura</span><span class="t" id="t117" style="left:1656.51px;top:1435.19px;font-size:13.00px;line-height:13.00px;color:#444;letter-spacing:0.159px;">11/4/2024 8:46:49 am</span><span class="t" id="t118" style="left:149.88px;top:1492.71px;font-size:19.00px;line-height:19.00px;color:#f44336;font-weight:700;transform:scaleX(0.8839);">In house Sale &amp; Purchase /Contract signed</span><span class="t" id="t119" style="left:1772.10px;top:1492.41px;font-size:19.00px;line-height:19.00px;color:#f44336;font-weight:700;">1</span><span class="t" id="t120" style="left:119.18px;top:1535.96px;font-size:12.80px;line-height:12.80px;color:#666;-webkit-text-stroke:0.35px currentColor;letter-spacing:0.868px;transform:scaleX(0.9200);">ACTION</span><span class="t" id="t121" style="left:428.23px;top:1535.96px;font-size:12.80px;line-height:12.80px;color:#666;-webkit-text-stroke:0.35px currentColor;letter-spacing:0.827px;transform:scaleX(0.9200);">REASON</span><span class="t" id="t122" style="left:749.00px;top:1535.96px;font-size:12.80px;line-height:12.80px;color:#666;-webkit-text-stroke:0.35px currentColor;letter-spacing:0.671px;transform:scaleX(0.9200);">CHANGES</span><span class="t" id="t123" style="left:1094.03px;top:1535.96px;font-size:12.80px;line-height:12.80px;color:#666;-webkit-text-stroke:0.35px currentColor;letter-spacing:0.595px;transform:scaleX(0.9200);">NOTES</span><span class="t" id="t124" style="left:1670.65px;top:1535.96px;font-size:12.80px;line-height:12.80px;color:#666;-webkit-text-stroke:0.35px currentColor;letter-spacing:0.562px;transform:scaleX(0.9200);">CHANGED BY</span><span class="t" id="t125" style="left:118.15px;top:1575.54px;font-size:13.30px;line-height:13.30px;color:#333;transform:scaleX(0.9614);">Deleted</span><span class="t" id="t126" style="left:1668.98px;top:1566.69px;font-size:13.00px;line-height:13.00px;color:#444;transform:scaleX(0.9606);">Branch Owner Laura</span><span class="t" id="t127" style="left:1656.51px;top:1585.69px;font-size:13.00px;line-height:13.00px;color:#444;letter-spacing:0.159px;">11/4/2024 8:46:49 am</span><span class="t" id="t128" style="left:1323.01px;top:1661.94px;font-size:13.30px;line-height:13.30px;color:#5f5f5f;">Rows per page:</span><span class="t" id="t129" style="left:1457.33px;top:1661.04px;font-size:13.30px;line-height:13.30px;color:#5f5f5f;letter-spacing:0.500px;">250</span><span class="t" id="t130" style="left:1565.99px;top:1661.94px;font-size:13.30px;line-height:13.30px;color:#5f5f5f;letter-spacing:0.148px;">1-226 of 226</span><span class="t" id="t131" style="left:78.78px;top:1777.66px;font-size:15.40px;line-height:15.40px;color:#fff;-webkit-text-stroke:0.35px currentColor;transform:scaleX(0.9646);">© Copyright 2007-2024 Ravebuild</span><span class="t" id="t132" style="left:315.87px;top:1777.66px;font-size:15.40px;line-height:15.40px;color:#fff;-webkit-text-stroke:0.35px currentColor;transform:scaleX(0.9756);">Privacy Policy</span><span class="t" id="t133" style="left:440.06px;top:1777.66px;font-size:15.40px;line-height:15.40px;color:#fff;-webkit-text-stroke:0.35px currentColor;transform:scaleX(0.9843);">Terms of Service</span><span class="t" id="t134" style="left:1475.37px;top:1777.66px;font-size:15.40px;line-height:15.40px;color:#fff;-webkit-text-stroke:0.35px currentColor;transform:scaleX(0.9828);">About</span><span class="t" id="t135" style="left:1545.24px;top:1777.66px;font-size:15.40px;line-height:15.40px;color:#fff;-webkit-text-stroke:0.35px currentColor;transform:scaleX(0.9791);">Users Manual</span><span class="t" id="t136" style="left:1668.11px;top:1777.66px;font-size:15.40px;line-height:15.40px;color:#fff;-webkit-text-stroke:0.35px currentColor;transform:scaleX(0.9926);">Support</span><span class="t" id="t137" style="left:1751.83px;top:1777.66px;font-size:15.40px;line-height:15.40px;color:#fff;-webkit-text-stroke:0.35px currentColor;transform:scaleX(0.9813);">Contact Us</span>
</body></html>
